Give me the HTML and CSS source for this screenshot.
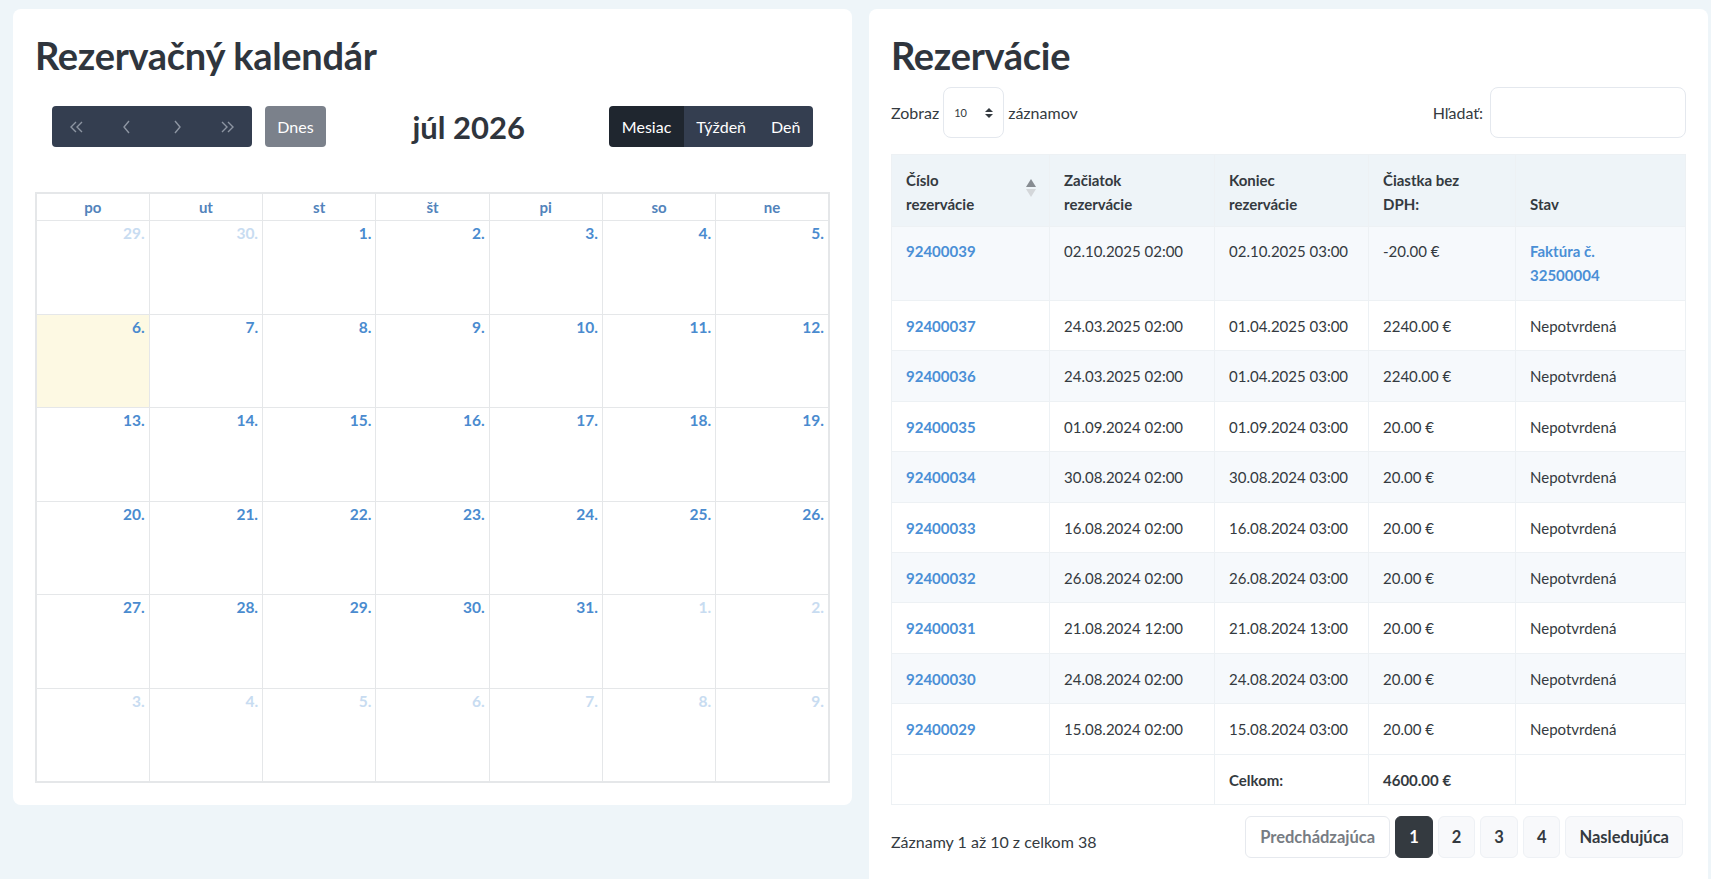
FILE: index.html
```html
<!DOCTYPE html>
<html lang="sk">

<head>
  <meta charset="UTF-8">
  <title>Rezervácie</title>

  <link rel="stylesheet" href="styles.css">
</head>

<body>
  <div class="page">
    <!-- kalendar -->
    <section class="card">
      <h1>Rezervačný kalendár</h1>

      <div class="toolbar">
        <div class="left">
          <div class="btn-group">
            <button class="btn nav">
              <svg width="16" height="14" viewBox="0 0 16 14"><polyline points="7,2 2,7 7,12" /><polyline points="13,2 8,7 13,12" /></svg>
            </button>
            <button class="btn nav">
              <svg width="16" height="14" viewBox="0 0 16 14"><polyline points="10,1 5,7 10,13" /></svg>
            </button>
            <button class="btn nav">
              <svg width="16" height="14" viewBox="0 0 16 14"><polyline points="6,1 11,7 6,13" /></svg>
            </button>
            <button class="btn nav">
              <svg width="16" height="14" viewBox="0 0 16 14"><polyline points="3,2 8,7 3,12" /><polyline points="9,2 14,7 9,12" /></svg>
            </button>
          </div>
          <button class="btn today">Dnes</button>
        </div>
        <h2>júl 2026</h2>
        <div class="btn-group">
          <button class="btn view active">Mesiac</button>
          <button class="btn view">Týždeň</button>
          <button class="btn view">Deň</button>
        </div>
      </div>

      <table class="calendar">
        <thead>
          <tr>
            <th>po</th><th>ut</th><th>st</th><th>št</th><th>pi</th><th>so</th><th>ne</th>
          </tr>
        </thead>
        <tbody>
          <tr>
            <td class="other">29.</td><td class="other">30.</td><td>1.</td><td>2.</td><td>3.</td><td>4.</td><td>5.</td>
          </tr>
          <tr>
            <td class="today">6.</td><td>7.</td><td>8.</td><td>9.</td><td>10.</td><td>11.</td><td>12.</td>
          </tr>
          <tr>
            <td>13.</td><td>14.</td><td>15.</td><td>16.</td><td>17.</td><td>18.</td><td>19.</td>
          </tr>
          <tr>
            <td>20.</td><td>21.</td><td>22.</td><td>23.</td><td>24.</td><td>25.</td><td>26.</td>
          </tr>
          <tr>
            <td>27.</td><td>28.</td><td>29.</td><td>30.</td><td>31.</td><td class="other">1.</td><td class="other">2.</td>
          </tr>
          <tr>
            <td class="other">3.</td><td class="other">4.</td><td class="other">5.</td><td class="other">6.</td><td class="other">7.</td><td class="other">8.</td><td class="other">9.</td>
          </tr>
        </tbody>
      </table>
    </section>

    <!-- zoznam rezervacii -->
    <section class="card list-card">
      <h1>Rezervácie</h1>

      <div class="controls">
        <label class="length">Zobraz
          <span class="select">10
            <svg width="8" height="12" viewBox="0 0 8 12"><polygon points="4,1 8,5 0,5" /><polygon points="0,7 8,7 4,11" /></svg>
          </span>
          záznamov</label>
        <label class="search">Hľadať: <span class="input"></span></label>
      </div>

      <table class="list">
        <colgroup>
          <col style="width: 158px">
          <col style="width: 165px">
          <col style="width: 154px">
          <col style="width: 147px">
          <col>
        </colgroup>
        <thead>
          <tr>
            <th class="sorting">Číslo<br>rezervácie
              <svg class="sort" width="12" height="22" viewBox="0 0 12 22"><polygon class="up" points="6,2 11,10 1,10" /><polygon class="down" points="1,12 11,12 6,20" /></svg>
            </th>
            <th>Začiatok<br>rezervácie</th>
            <th>Koniec<br>rezervácie</th>
            <th>Čiastka bez<br>DPH:</th>
            <th>Stav</th>
          </tr>
        </thead>
        <tbody>
          <tr class="tall">
            <td><a href="#">92400039</a></td><td>02.10.2025 02:00</td><td>02.10.2025 03:00</td><td>-20.00 €</td><td><a href="#">Faktúra č.<br>32500004</a></td>
          </tr>
          <tr>
            <td><a href="#">92400037</a></td><td>24.03.2025 02:00</td><td>01.04.2025 03:00</td><td>2240.00 €</td><td>Nepotvrdená</td>
          </tr>
          <tr>
            <td><a href="#">92400036</a></td><td>24.03.2025 02:00</td><td>01.04.2025 03:00</td><td>2240.00 €</td><td>Nepotvrdená</td>
          </tr>
          <tr>
            <td><a href="#">92400035</a></td><td>01.09.2024 02:00</td><td>01.09.2024 03:00</td><td>20.00 €</td><td>Nepotvrdená</td>
          </tr>
          <tr>
            <td><a href="#">92400034</a></td><td>30.08.2024 02:00</td><td>30.08.2024 03:00</td><td>20.00 €</td><td>Nepotvrdená</td>
          </tr>
          <tr>
            <td><a href="#">92400033</a></td><td>16.08.2024 02:00</td><td>16.08.2024 03:00</td><td>20.00 €</td><td>Nepotvrdená</td>
          </tr>
          <tr>
            <td><a href="#">92400032</a></td><td>26.08.2024 02:00</td><td>26.08.2024 03:00</td><td>20.00 €</td><td>Nepotvrdená</td>
          </tr>
          <tr>
            <td><a href="#">92400031</a></td><td>21.08.2024 12:00</td><td>21.08.2024 13:00</td><td>20.00 €</td><td>Nepotvrdená</td>
          </tr>
          <tr>
            <td><a href="#">92400030</a></td><td>24.08.2024 02:00</td><td>24.08.2024 03:00</td><td>20.00 €</td><td>Nepotvrdená</td>
          </tr>
          <tr>
            <td><a href="#">92400029</a></td><td>15.08.2024 02:00</td><td>15.08.2024 03:00</td><td>20.00 €</td><td>Nepotvrdená</td>
          </tr>
        </tbody>
        <tfoot>
          <tr>
            <td></td><td></td><th>Celkom:</th><th>4600.00 €</th><td></td>
          </tr>
        </tfoot>
      </table>

      <div class="footer">
        <div class="info">Záznamy 1 až 10 z celkom 38</div>
        <div class="pagination">
          <span class="page-btn disabled">Predchádzajúca</span>
          <span class="page-btn current">1</span>
          <span class="page-btn">2</span>
          <span class="page-btn">3</span>
          <span class="page-btn">4</span>
          <span class="page-btn">Nasledujúca</span>
        </div>
      </div>
    </section>
  </div>
</body>

</html>
```

FILE: styles.css
```css
html {
  background: #eef5f9;
}

body {
  margin: 0;
  font-family: Lato, "Open Sans", sans-serif;
  font-size: 15px;
  color: #343a40;
}

.page {
  display: flex;
  gap: 17px;
  padding: 9px 0 0 13px;
  align-items: flex-start;
}

.card {
  width: 839px;
  box-sizing: border-box;
  background: white;
  border-radius: 8px;
  padding: 21px 22px 22px;
}

.list-card {
  padding-bottom: 40px;
}

h1 {
  margin: 0;
  font-size: 38px;
  font-weight: 700;
  line-height: 50px;
  color: #2f353d;
  letter-spacing: -0.3px;
}

/* toolbar kalendara */
.toolbar {
  display: flex;
  align-items: center;
  justify-content: space-between;
  margin: 26px 17px 45px;
}

.toolbar .left {
  display: flex;
  gap: 13px;
}

.toolbar h2 {
  margin: 0 0 0 2px;
  font-size: 31px;
  font-weight: 700;
  color: #2f353d;
}

.btn-group {
  display: flex;
  border-radius: 4px;
  overflow: hidden;
}

.btn {
  border: 0;
  height: 41px;
  font-family: inherit;
  font-size: 16px;
  color: white;
  background: #343e50;
  padding: 0 12.5px;
}

.btn.nav {
  width: 50px;
  display: flex;
  align-items: center;
  justify-content: center;
}

.btn.nav svg {
  fill: none;
  stroke: #8d95a2;
  stroke-width: 1.4;
}

.btn.today {
  width: 61px;
  padding: 0;
  background: #7b818b;
  border-radius: 4px;
}

.btn.view.active {
  background: #1f262f;
}

/* mriezka kalendara */
.calendar {
  width: 100%;
  border-collapse: collapse;
  table-layout: fixed;
  border: 2px solid #e5e7e9;
}

.calendar th,
.calendar td {
  border: 1px solid #e5e7e9;
}

.calendar th {
  height: 24px;
  font-size: 15px;
  font-weight: 700;
  color: #5283bb;
}

.calendar tbody tr {
  height: 93.5px;
}

.calendar td {
  vertical-align: top;
  text-align: right;
  padding: 3px 4px;
  font-size: 15.5px;
  font-weight: 700;
  color: #4a8bcf;
}

.calendar td.other {
  color: #c8dcf1;
}

.calendar td.today {
  background: #fdf9e3;
}

/* zoznam */
.controls {
  display: flex;
  justify-content: space-between;
  align-items: center;
  margin: 7px 0 16px;
  font-size: 16px;
}

.controls label {
  display: flex;
  align-items: center;
}

.select {
  display: flex;
  align-items: center;
  justify-content: space-between;
  box-sizing: border-box;
  width: 61px;
  height: 51px;
  margin: 0 4px;
  padding: 0 10px;
  border: 1px solid #e4e8ee;
  border-radius: 8px;
  font-size: 11px;
}

.select svg {
  fill: #343a40;
}

.input {
  display: block;
  box-sizing: border-box;
  width: 196px;
  height: 51px;
  margin-left: 7px;
  border: 1px solid #e4e8ee;
  border-radius: 8px;
}

.list {
  width: 100%;
  border-collapse: collapse;
  table-layout: fixed;
}

.list th,
.list td {
  border: 1px solid #edf1f4;
  text-align: left;
  padding: 13px 14px 12.4px;
  line-height: 24px;
}

.list thead th {
  background: #eef4f8;
  height: 46px;
  vertical-align: bottom;
  padding-bottom: 10px;
  font-weight: 700;
}

.list thead th.sorting {
  position: relative;
}

.sort {
  position: absolute;
  right: 12px;
  top: 22px;
}

.sort .up {
  fill: #878c92;
}

.sort .down {
  fill: #d4d7da;
}

.list tbody td {
  vertical-align: top;
  height: 24px;
}

.list tbody tr:nth-child(odd) {
  background: #f6f9fc;
}

.list tr.tall td {
  padding-top: 12px;
  padding-bottom: 13px;
}

.list a {
  color: #4a8fd6;
  font-weight: 700;
  text-decoration: none;
}

.list tfoot th {
  font-weight: 700;
}

.footer {
  display: flex;
  justify-content: space-between;
  align-items: center;
  margin-top: 11px;
}

.info {
  padding-top: 9px;
  font-size: 16px;
}

.pagination {
  display: flex;
  gap: 5px;
  margin-right: 3px;
}

.page-btn {
  display: flex;
  align-items: center;
  justify-content: center;
  box-sizing: border-box;
  height: 42px;
  min-width: 36px;
  padding: 0 13px;
  border: 1px solid #eef1f5;
  border-radius: 6px;
  background: #f8f9fb;
  font-size: 16.5px;
  font-weight: 700;
  color: #343a40;
}

.page-btn.disabled {
  background: white;
  border-color: #e6e9ee;
  color: #777c83;
  padding: 0 14px;
}

.page-btn.current {
  background: #343a40;
  border-color: #343a40;
  color: white;
}
```
